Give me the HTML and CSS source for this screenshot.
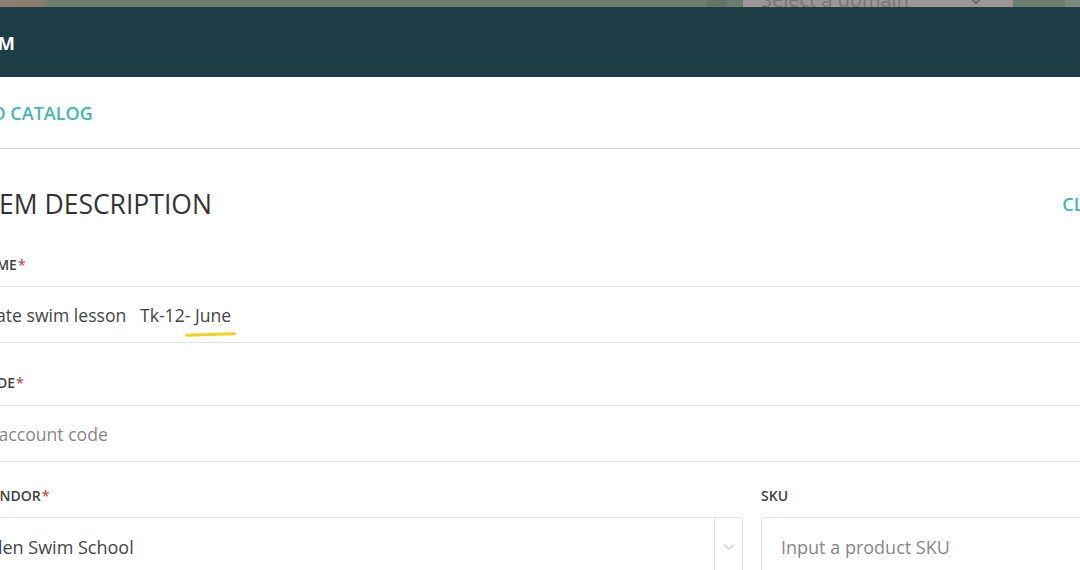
FILE: index.html
```html
<!DOCTYPE html>
<html lang="en">
<head>
<meta charset="utf-8">
<title>Add item</title>
<link rel="stylesheet" href="styles.css">
</head>
<body>
<div class="backdrop">
  <div class="bd-left"></div>
  <div class="bd-fill"></div>
  <div class="bd-icon"></div>
  <div class="bd-gap"></div>
  <div class="bd-select">
    <span class="bd-select-text">Select a domain</span>
    <svg class="bd-chev" width="18" height="10" viewBox="0 0 18 10"><path d="M1 1 L9 8 L17 1" fill="none" stroke="#6f6a6a" stroke-width="2"/></svg>
  </div>
  <div class="bd-fill2"></div>
  <div class="bd-right"></div>
</div>
<div class="modal">
  <header class="modal-header">
    <h1 class="modal-title">ADD ITEM</h1>
  </header>
  <nav class="modal-nav">
    <a class="back-link" href="#">BACK TO CATALOG</a>
  </nav>
  <section class="modal-body">
    <div class="section-head">
      <h2 class="section-title">ITEM DESCRIPTION</h2>
      <a class="clear-link" href="#">CLEAR</a>
    </div>
    <div class="field field-name">
      <label class="field-label label-name">NAME<span class="req">*</span></label>
      <div class="text-input input-name">Private swim lesson&nbsp;&nbsp; Tk-12- <span class="marked">June</span></div>
    </div>
    <div class="field field-code">
      <label class="field-label label-code">CODE<span class="req">*</span></label>
      <div class="text-input input-code placeholder">GL account code</div>
    </div>
    <div class="field-row">
      <div class="field">
        <label class="field-label label-vendor">VENDOR<span class="req">*</span></label>
        <div class="select-input">
          <span class="select-value">Golden Swim School</span>
          <span class="select-indicator">
            <svg width="12" height="8" viewBox="0 0 12 8"><path d="M1 1.5 L6 6 L11 1.5" fill="none" stroke="#cfcfcf" stroke-width="1.4"/></svg>
          </span>
        </div>
      </div>
      <div class="field">
        <label class="field-label sku-label">SKU</label>
        <div class="box-input placeholder">Input a product SKU</div>
      </div>
    </div>
  </section>
</div>
</body>
</html>
```
FILE: styles.css
```css
html, body {
  margin: 0;
  padding: 0;
}
body {
  width: 1080px;
  height: 570px;
  overflow: hidden;
  background: #ffffff;
  font-family: "Open Sans", "Liberation Sans", sans-serif;
}

/* dimmed page behind the modal */
.backdrop {
  height: 7px;
  display: flex;
  overflow: hidden;
  background: #6b7d6e;
}
.bd-left {
  width: 52px;
  background: linear-gradient(90deg, #8d8072 0%, #8a7c6c 80%, #6b7d6e 100%);
}
.bd-fill { width: 655px; }
.bd-icon {
  width: 20px;
  background: #66736a;
}
.bd-gap { width: 16px; }
.bd-select {
  width: 270px;
  background: #9d9696;
  display: flex;
  align-items: flex-end;
  justify-content: space-between;
  padding: 0 28px 0 18px;
  box-sizing: border-box;
}
.bd-select-text {
  font-size: 20px;
  line-height: 20px;
  color: #7b7474;
  margin-bottom: -3px;
  white-space: nowrap;
}
.bd-chev { margin-bottom: 2px; }
.bd-fill2 { width: 52px; }
.bd-right {
  flex: 1;
  background: #7d8a7e;
}

/* modal */
.modal {
  margin-left: -100px;
  width: 1250px;
}
.modal-header {
  height: 70px;
  background: #1d3e47;
  display: flex;
  align-items: center;
  padding-left: 24px;
}
.modal-title {
  margin: 0;
  font-size: 18.5px;
  font-weight: 700;
  color: #ffffff;
  letter-spacing: 0.2px;
}
.modal-nav {
  height: 71px;
  display: flex;
  align-items: center;
  padding-left: 30px;
  border-bottom: 1px solid #dadada;
}
.back-link {
  font-size: 18px;
  font-weight: 600;
  color: #3fb8ae;
  text-decoration: none;
}

.modal-body {
  padding: 0 33px 0 50px;
}
.section-head {
  display: flex;
  justify-content: space-between;
  align-items: center;
  margin-top: 36px;
  height: 38px;
}
.section-title {
  margin: 0;
  padding-left: 27px;
  font-size: 26.5px;
  font-weight: 400;
  color: #333333;
}
.clear-link {
  font-size: 18px;
  font-weight: 600;
  color: #3fb8ae;
  text-decoration: none;
}

.field {
  display: flex;
  flex-direction: column;
}
.field-name { margin-top: 33px; }
.field-code { margin-top: 31px; }
.field-label {
  display: block;
  padding-left: 29px;
  font-size: 14px;
  line-height: 18px;
  font-weight: 600;
  color: #3f3f3f;
  margin-bottom: 12px;
}
.label-name { padding-left: 26px; }
.label-code { padding-left: 27px; margin-bottom: 13px; }
.label-vendor { padding-left: 33px; }
.req { color: #c4553f; margin-left: 1px; }

.text-input {
  height: 55px;
  border-top: 1px solid #e2e2e2;
  border-bottom: 1px solid #e2e2e2;
  display: flex;
  align-items: center;
  padding-left: 16px;
  font-size: 18px;
  color: #444444;
  white-space: pre;
}
.input-name { font-size: 17.6px; padding-left: 15px; }
.input-code { padding-left: 22px; font-size: 17.6px; }
.placeholder { color: #878787; }
.marked {
  position: relative;
}
.marked::after {
  content: "";
  position: absolute;
  left: -10px;
  right: -5px;
  bottom: -9px;
  height: 3px;
  border-radius: 2px;
  background: #f2d11c;
  transform: rotate(-1.5deg);
}

.field-row {
  display: grid;
  grid-template-columns: 793px 1fr;
  gap: 18px;
  margin-top: 25px;
}
.sku-label { padding-left: 0; }
.select-input {
  height: 57px;
  border: 1px solid #e2e2e2;
  border-radius: 3px;
  display: flex;
  align-items: center;
}
.select-value {
  flex: 1;
  padding-left: 12px;
  font-size: 18px;
  color: #444444;
}
.select-indicator {
  width: 27px;
  align-self: stretch;
  border-left: 1px solid #e2e2e2;
  display: flex;
  align-items: center;
  justify-content: center;
}
.box-input {
  height: 57px;
  border: 1px solid #e2e2e2;
  border-radius: 3px;
  display: flex;
  align-items: center;
  padding-left: 19px;
  font-size: 18px;
}
```
